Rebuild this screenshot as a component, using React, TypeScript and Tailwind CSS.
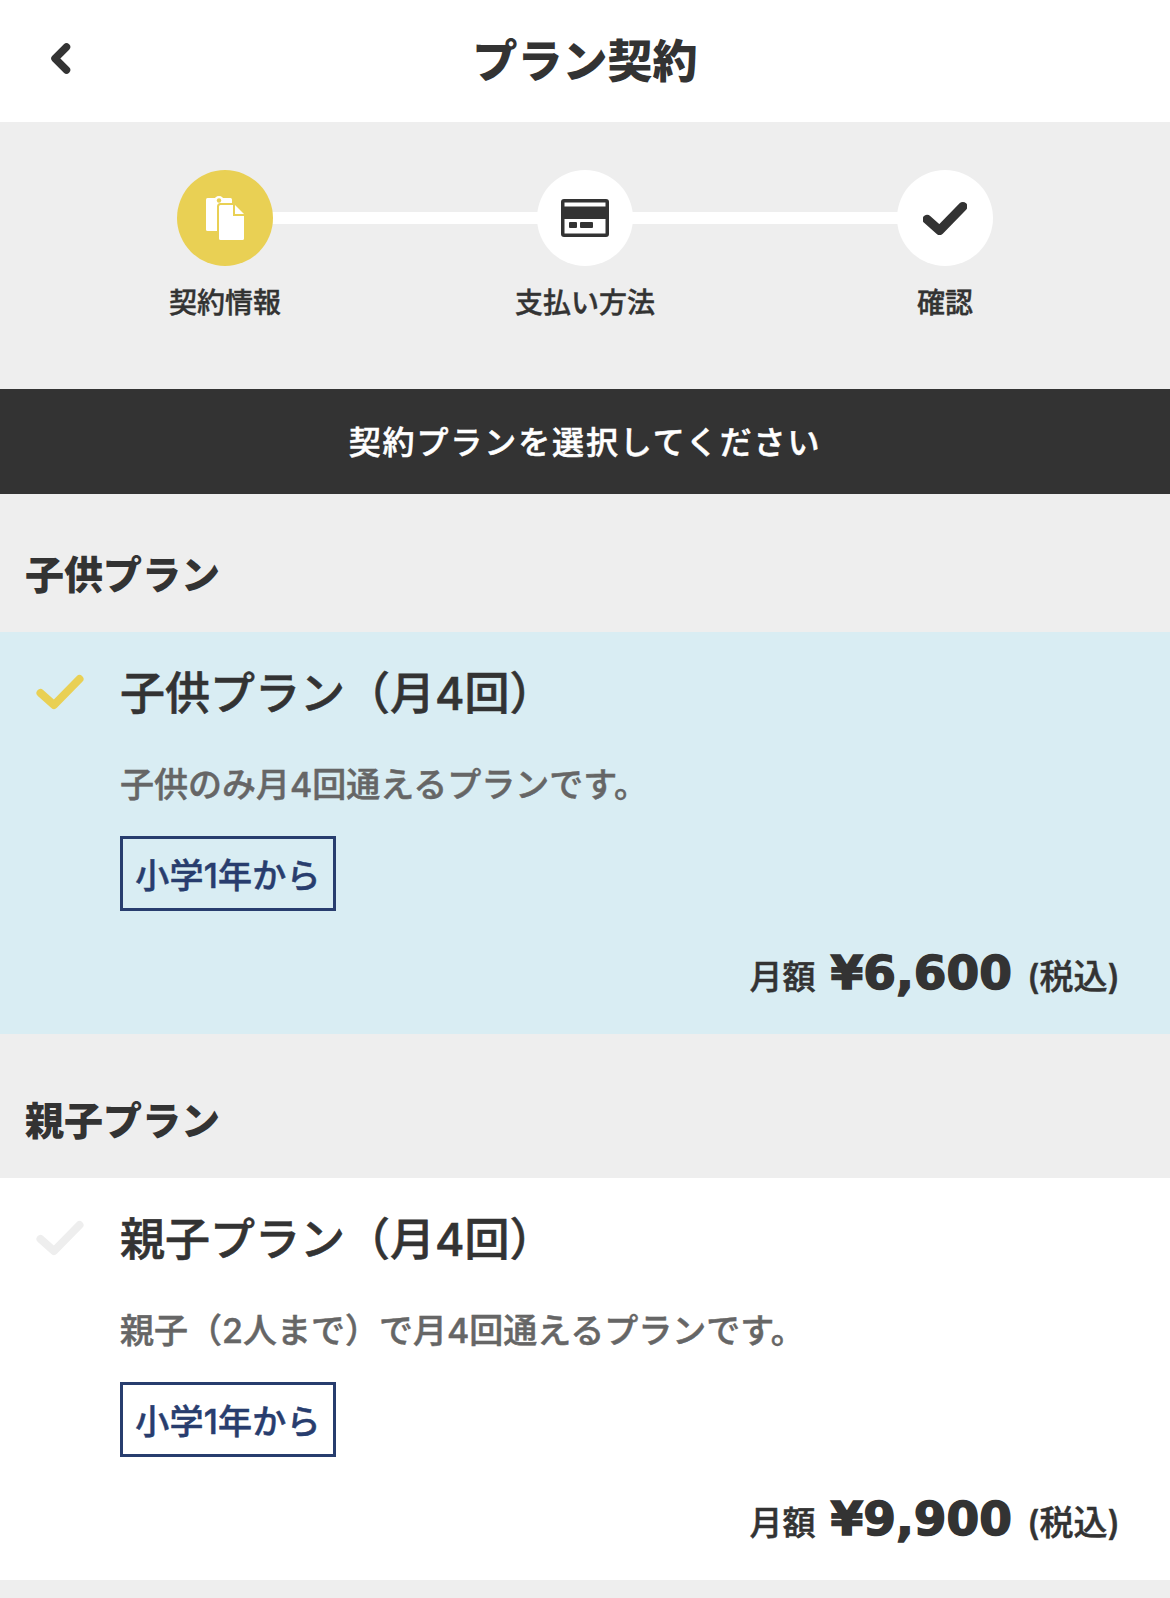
const jp = "font-['Inter','Noto_Sans_CJK_JP',sans-serif]";

function CheckMark({ className, heavy }: { className: string; heavy?: boolean }) {
  return (
    <svg viewBox="0 0 48 36" className={className} fill="none">
      <path d="M4.500 19 L18 31 L43.500 5" stroke="currentColor" strokeWidth={heavy ? 10 : 8} strokeLinecap="round" strokeLinejoin="round" />
    </svg>
  );
}

function PasteIcon() {
  return (
    <svg viewBox="0 0 40 44" className="w-10 h-11" fill="#fff">
      <rect x="1" y="2" width="26" height="33" rx="1.500" />
      <circle cx="14" cy="5" r="5" />
      <circle cx="14" cy="4.500" r="2.200" fill="#e9d054" />
      <path
        d="M15.500 9h12.500v11h11v22.500a1.500 1.500 0 0 1-1.500 1.500h-22a1.500 1.500 0 0 1-1.500-1.500v-32a1.500 1.500 0 0 1 1.500-1.500z"
        stroke="#e9d054"
        strokeWidth="4"
        paintOrder="stroke"
      />
      <path d="M30 9 39 18h-9z" />
    </svg>
  );
}

function CardIcon() {
  return (
    <svg viewBox="0 0 48 38" className="w-12 h-[38px]">
      <rect x="0" y="0" width="48" height="38" rx="3" fill="#333" />
      <rect x="3.500" y="3.500" width="41" height="4" fill="#fff" />
      <rect x="3.500" y="20" width="41" height="14.500" fill="#fff" />
      <rect x="8" y="23" width="8" height="6" rx="1" fill="#333" />
      <rect x="19" y="23" width="13" height="6" rx="1" fill="#333" />
    </svg>
  );
}

function Step({ label, active, children }: { label: string; active?: boolean; children: React.ReactNode }) {
  return (
    <div className="flex flex-col items-center">
      <div className={`w-24 h-24 rounded-full flex items-center justify-center ${active ? "bg-[#e9d054]" : "bg-white"}`}>
        {children}
      </div>
      <div className="mt-[17px] text-[28px] leading-10 font-medium [-webkit-text-stroke:0.4px] text-[#333]">{label}</div>
    </div>
  );
}

function PlanCard({ title, desc, price, selected }: { title: string; desc: string; price: string; selected?: boolean }) {
  return (
    <div className={`flex h-[402px] pl-9 pr-[50px] pt-[34px] ${selected ? "bg-[#d9edf3]" : "bg-white"}`}>
      <CheckMark className={`w-12 h-9 mt-2 shrink-0 ${selected ? "text-[#e9d054]" : "text-[#eeeeee]"}`} />
      <div className="ml-9 flex-1">
        <div className="text-[45px] leading-[56px] font-medium [-webkit-text-stroke:0.6px] text-[#333]">{title}</div>
        <div className="mt-[39px] text-[34px] leading-[48px] font-medium [-webkit-text-stroke:0.5px] text-[#666]">{desc}</div>
        <div className="mt-[27px] w-[216px] h-[75px] pt-1 border-[3px] border-[#283d6e] flex items-center justify-center text-[34px] tracking-[0.2px] font-medium [-webkit-text-stroke:0.5px] text-[#283d6e]">
          小学1年から
        </div>
        <div className="mt-[32px] flex items-baseline justify-end text-[#333]">
          <span className="text-[33px] font-medium [-webkit-text-stroke:0.5px]">月額</span>
          <span className="ml-[15px] font-['DejaVu_Sans',sans-serif] text-[47px] leading-[60px] font-bold [-webkit-text-stroke:1.5px_#333]">{price}</span>
          <span className="ml-[15px] text-[34px] font-medium [-webkit-text-stroke:0.5px]">(税込)</span>
        </div>
      </div>
    </div>
  );
}

export default function App() {
  return (
    <div className={`${jp} w-[1170px] h-[1598px] overflow-hidden bg-[#eeeeee]`}>
      <header className="relative h-[122px] pt-[2px] bg-white flex items-center justify-center">
        <svg viewBox="0 0 21 31" className="absolute left-[50px] top-[43px] w-[21px] h-[31px]" fill="none">
          <path d="M16.500 4 L5 15.500 L16.500 27" stroke="#333" strokeWidth="7.500" strokeLinecap="round" strokeLinejoin="round" />
        </svg>
        <h1 className="text-[45px] font-black text-[#333]">プラン契約</h1>
      </header>

      <section className="relative h-[267px] pt-12 grid grid-cols-3 px-[45px]">
        <div className="absolute left-[225px] top-[90px] w-[720px] h-3 bg-white" />
        <div className="relative">
          <Step label="契約情報" active><PasteIcon /></Step>
        </div>
        <div className="relative">
          <Step label="支払い方法"><CardIcon /></Step>
        </div>
        <div className="relative">
          <Step label="確認"><CheckMark heavy className="w-11 h-[33px] text-[#333]" /></Step>
        </div>
      </section>

      <div className="h-[105px] pt-[2px] bg-[#333] flex items-center justify-center text-[32px] tracking-[1.9px] font-medium [-webkit-text-stroke:0.5px] text-white">
        契約プランを選択してください
      </div>

      <h2 className="h-[138px] pl-[25px] pt-[53px] text-[39px] leading-[56px] font-black text-[#333]">子供プラン</h2>
      <PlanCard selected title="子供プラン（月4回）" desc="子供のみ月4回通えるプランです。" price="¥6,600" />

      <h2 className="h-[144px] pl-[25px] pt-[59px] text-[39px] leading-[56px] font-black text-[#333]">親子プラン</h2>
      <PlanCard title="親子プラン（月4回）" desc="親子（2人まで）で月4回通えるプランです。" price="¥9,900" />
    </div>
  );
}
